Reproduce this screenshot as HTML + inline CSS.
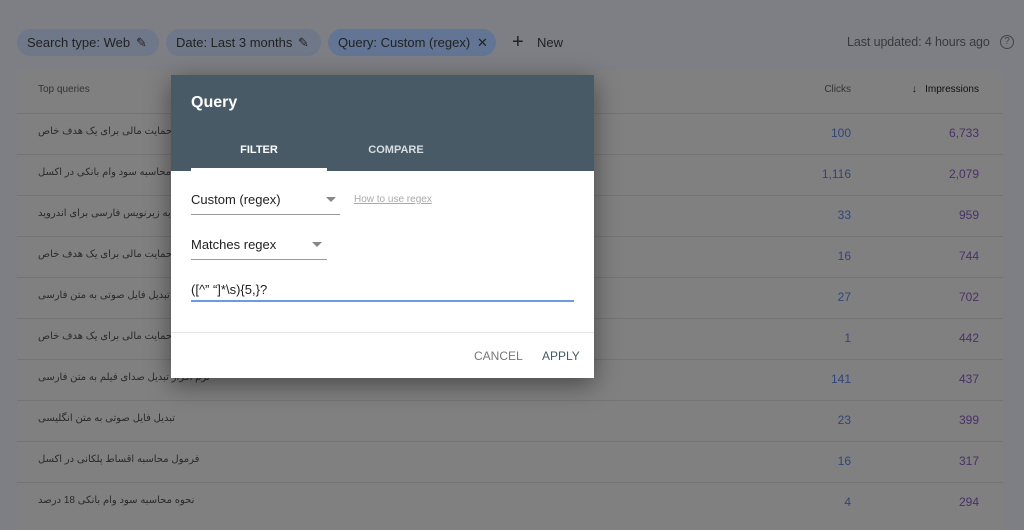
<!DOCTYPE html>
<html><head><meta charset="utf-8"><style>
*{margin:0;padding:0;box-sizing:border-box}
body{width:1024px;height:523px;overflow:hidden;background:#7d7f85;font-family:"Liberation Sans","DejaVu Sans",sans-serif;position:relative}
.chip{position:absolute;top:29px;height:27px;border-radius:14px;background:#6f7888;color:#222;font-size:13px;line-height:27px;padding-left:10px}
.tbl{position:absolute;left:17px;top:70px;width:986px;height:460px;background:#808080}
.row{position:absolute;left:0;width:986px;height:41px;border-top:1px solid #747474}
.row .q{position:absolute;left:21px;top:12px;font-size:10px;color:#2a2a2a;direction:rtl;unicode-bidi:embed;white-space:nowrap}
.row .c{position:absolute;right:152px;top:12px;font-size:12px;color:#30457a}
.row .i{position:absolute;right:24px;top:12px;font-size:12px;color:#4a3068}
.dlg{position:absolute;left:171px;top:75px;width:423px;height:303px;background:#fff;box-shadow:0 6px 24px rgba(0,0,0,.45)}
.hd{height:96px;background:#475a65;position:relative;color:#fff}
</style></head><body>
<div class="chip" style="left:17px;width:142px">Search type: Web <span style="position:absolute;left:119px;font-size:13px">✎</span></div>
<div class="chip" style="left:166px;width:155px">Date: Last 3 months <span style="position:absolute;left:132px">✎</span></div>
<div class="chip" style="left:328px;width:168px;background:#627594">Query: Custom (regex) <span style="position:absolute;left:149px">✕</span></div>
<div style="position:absolute;left:512px;top:31px;font-size:20px;color:#222;line-height:22px">+</div>
<div style="position:absolute;left:537px;top:35px;font-size:13px;color:#222">New</div>
<div style="position:absolute;left:847px;top:35px;font-size:12.5px;color:#3a3a3a;letter-spacing:-0.1px">Last updated: 4 hours ago</div>
<div style="position:absolute;left:1000px;top:35px;width:14px;height:14px;border:1.3px solid #444;border-radius:50%;font-size:10px;text-align:center;line-height:12px;color:#444">?</div>
<div class="tbl">
<div style="position:absolute;left:21px;top:14px;font-size:10px;color:#333">Top queries</div>
<div style="position:absolute;right:152px;top:14px;font-size:10px;color:#333">Clicks</div>
<div style="position:absolute;right:24px;top:14px;font-size:10px;color:#111">↓&nbsp;&nbsp;&nbsp;Impressions</div>
<div class="row" style="top:43px"><span class="q">روش های حمایت مالی برای یک هدف خاص</span><span class="c">100</span><span class="i">6,733</span></div>
<div class="row" style="top:84px"><span class="q">فرمول محاسبه سود وام بانکی در اکسل</span><span class="c">1,116</span><span class="i">2,079</span></div>
<div class="row" style="top:125px"><span class="q">فیلم به زیرنویس فارسی برای اندروید</span><span class="c">33</span><span class="i">959</span></div>
<div class="row" style="top:166px"><span class="q">روش های حمایت مالی برای یک هدف خاص</span><span class="c">16</span><span class="i">744</span></div>
<div class="row" style="top:207px"><span class="q">سایت تبدیل فایل صوتی به متن فارسی</span><span class="c">27</span><span class="i">702</span></div>
<div class="row" style="top:248px"><span class="q">روش های حمایت مالی برای یک هدف خاص</span><span class="c">1</span><span class="i">442</span></div>
<div class="row" style="top:289px"><span class="q">نرم افزار تبدیل صدای فیلم به متن فارسی</span><span class="c">141</span><span class="i">437</span></div>
<div class="row" style="top:330px"><span class="q">تبدیل فایل صوتی به متن انگلیسی</span><span class="c">23</span><span class="i">399</span></div>
<div class="row" style="top:371px"><span class="q">فرمول محاسبه اقساط پلکانی در اکسل</span><span class="c">16</span><span class="i">317</span></div>
<div class="row" style="top:412px"><span class="q">نحوه محاسبه سود وام بانکی 18 درصد</span><span class="c">4</span><span class="i">294</span></div>
</div>
<div class="dlg">
<div class="hd">
<div style="position:absolute;left:20px;top:19px;font-size:16px;font-weight:bold">Query</div>
<div style="position:absolute;left:20px;top:69px;width:136px;text-align:center;font-size:11px;font-weight:bold">FILTER</div>
<div style="position:absolute;left:165px;top:69px;width:120px;text-align:center;font-size:11px;font-weight:bold;color:#d8dde0">COMPARE</div>
<div style="position:absolute;left:20px;top:93px;width:136px;height:3px;background:#fff"></div>
</div>
<div style="position:absolute;left:20px;top:117px;font-size:13px;color:#222">Custom (regex)</div>
<div style="position:absolute;left:155px;top:122px;border:5px solid transparent;border-top:5px solid #888"></div>
<div style="position:absolute;left:20px;top:139px;width:149px;height:1px;background:#999"></div>
<div style="position:absolute;left:183px;top:119px;font-size:10px;color:#aaa;text-decoration:underline">How to use regex</div>
<div style="position:absolute;left:20px;top:162px;font-size:13px;color:#222">Matches regex</div>
<div style="position:absolute;left:141px;top:167px;border:5px solid transparent;border-top:5px solid #888"></div>
<div style="position:absolute;left:20px;top:184px;width:136px;height:1px;background:#999"></div>
<div style="position:absolute;left:20px;top:207px;font-size:13px;color:#222">([^” “]*\s){5,}?</div>
<div style="position:absolute;left:20px;top:225px;width:383px;height:1.5px;background:#6a9be8"></div>
<div style="position:absolute;left:0;top:257px;width:423px;height:1px;background:#e5e5e5"></div>
<div style="position:absolute;left:303px;top:274px;font-size:12px;color:#777">CANCEL</div>
<div style="position:absolute;left:371px;top:274px;font-size:12px;color:#455a64">APPLY</div>
</div>
</body></html>
